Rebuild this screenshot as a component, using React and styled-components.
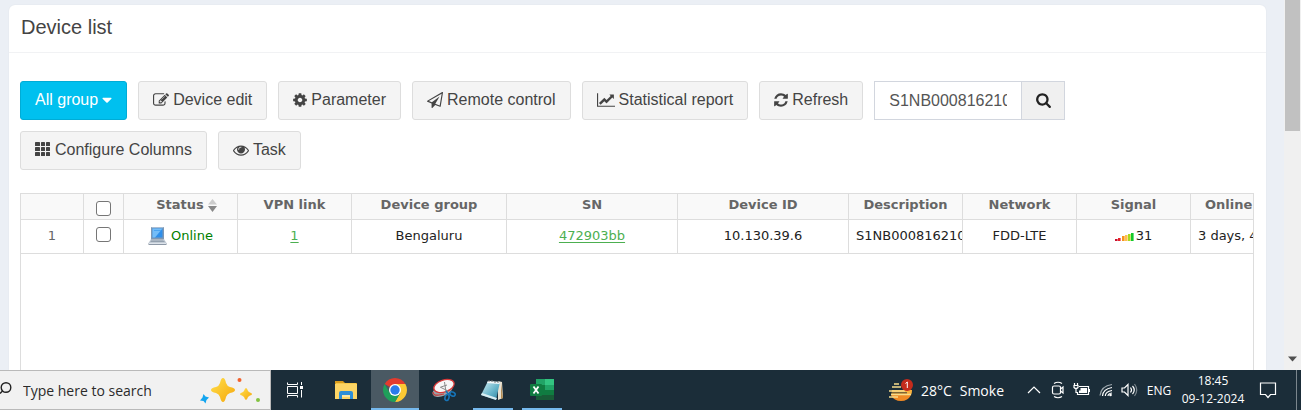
import React from "react";
import styled, { createGlobalStyle, css } from "styled-components";

const GlobalStyle = createGlobalStyle`
  *, *::before, *::after { box-sizing: border-box; }
  html, body { margin: 0; height: 100%; overflow: hidden; }
  body { font-family: "Liberation Sans", Arial, sans-serif; font-size: 16px; color: #444; }
  button, input { font: inherit; color: inherit; margin: 0; }
`;

/* ---------- layout ---------- */

const Desktop = styled.div`
  display: flex;
  flex-direction: column;
  height: 100vh;
`;

const Browser = styled.div`
  flex: 1;
  min-height: 0;
  display: flex;
  background: #ebeff5;
`;

const Page = styled.main`
  flex: 1;
  min-width: 0;
  display: flex;
  padding: 5px 18px 0 9px;
`;

const Card = styled.section`
  flex: 1;
  min-width: 0;
  display: flex;
  flex-direction: column;
  background: #fff;
  border-radius: 6px 6px 0 0;
  box-shadow: 0 0 2px rgba(0, 0, 0, 0.06);
`;

const CardHeader = styled.header`
  padding: 10px 12px 13px;
  border-bottom: 1px solid #f1f2f4;
`;

const Title = styled.h1`
  margin: 0;
  font-size: 20px;
  line-height: 24px;
  font-weight: 400;
`;

const CardBody = styled.div`
  flex: 1;
  min-height: 0;
  display: flex;
  flex-direction: column;
  gap: 23px;
  padding: 28px 12px 0 11px;
`;

/* ---------- toolbar ---------- */

const Toolbar = styled.div`
  display: flex;
  flex-wrap: wrap;
  gap: 11px;
`;

const ToolButton = styled.button`
  display: flex;
  align-items: center;
  gap: 4px;
  height: 39px;
  padding: 0 14px 2px;
  border: 1px solid #ddd;
  border-radius: 3px;
  background: #f4f4f4;
  line-height: 20px;
  white-space: nowrap;
  ${(p) =>
    p.$primary &&
    css`
      background: #00c0ef;
      border-color: #00acd6;
      color: #fff;
    `}
`;

const SearchGroup = styled.form`
  display: flex;
  height: 39px;
`;

const SearchInput = styled.input`
  width: 147px;
  padding: 0 14px;
  border: 1px solid #d2d6de;
  border-right: 0;
  border-radius: 0;
  background: #fff;
  color: #555;
  outline: 0;
`;

const SearchButton = styled.button`
  display: flex;
  align-items: center;
  justify-content: center;
  width: 44px;
  padding: 0 0 2px;
  border: 1px solid #d2d6de;
  background: #f0f0f0;
  color: #222;
`;

const Glyph = styled.svg`
  display: block;
  flex: none;
  fill: currentColor;
`;

const FA = {
  edit: [1792, "M888 1184l116-116-152-152-116 116v56h96v96h56zm440-720q-16-16-33 1l-350 350q-17 17-1 33t33-1l350-350q17-17 1-33zm80 594v190q0 119-84.5 203.5t-203.5 84.5h-832q-119 0-203.5-84.5t-84.5-203.5v-832q0-119 84.5-203.5t203.5-84.5h832q63 0 117 25 15 7 18 23 3 17-9 29l-49 49q-14 14-32 8-23-6-45-6h-832q-66 0-113 47t-47 113v832q0 66 47 113t113 47h832q66 0 113-47t47-113v-126q0-13 9-22l64-64q15-15 35-7t20 29zm-96-738l288 288-672 672h-288v-288zm444 132l-92 92-288-288 92-92q28-28 68-28t68 28l152 152q28 28 28 68t-28 68z"],
  cog: [1792, "M1152 896q0-106-75-181t-181-75-181 75-75 181 75 181 181 75 181-75 75-181zm512-109v222q0 12-8 23t-20 13l-185 28q-19 54-39 91 35 50 107 138 10 12 10 25t-9 23q-27 37-99 108t-94 71q-12 0-26-9l-138-108q-44 23-91 38-16 136-29 186-7 28-36 28h-222q-14 0-24.5-8.5t-11.5-21.5l-28-184q-49-16-90-37l-141 107q-10 9-25 9-14 0-25-11-126-114-165-168-7-10-7-23 0-12 8-23 15-21 51-66.5t54-70.5q-27-50-41-99l-183-27q-13-2-21-12.5t-8-23.5v-222q0-12 8-23t19-13l186-28q14-46 39-92-40-57-107-138-10-12-10-24 0-10 9-23 26-36 98.5-107.5t94.5-71.5q13 0 26 10l138 107q44-23 91-38 16-136 29-186 7-28 36-28h222q14 0 24.5 8.5t11.5 21.5l28 184q49 16 90 37l142-107q9-9 24-9 13 0 25 10 129 119 165 170 7 8 7 22 0 12-8 23-15 21-51 66.5t-54 70.5q26 50 41 98l183 28q13 2 21 12.5t8 23.5z", 128],
  plane: [1792, "M1764 11q33 24 27 64l-256 1536q-5 29-32 45-14 8-31 8-11 0-24-5l-527-215-298 327q-18 21-47 21-14 0-23-4-19-7-30-23.5t-11-36.5v-452l-472-193q-37-14-40-55-3-39 32-59l1664-960q35-21 68 2zm-342 1499l221-1323-1434 827 336 137 863-639-478 797z"],
  chart: [2048, "M2048 1536v128h-2048v-1536h128v1408h1920zm-128-1248v435q0 21-19.5 29.5t-35.5-7.5l-121-121-633 633q-10 10-23 10t-23-10l-233-233-416 416-192-192 585-585q10-10 23-10t23 10l233 233 464-464-121-121q-16-16-7.5-35.5t29.5-19.5h435q14 0 23 9t9 23z"],
  refresh: [1792, "M1639 1056q0 5-1 7-64 268-268 434.5t-478 166.5q-146 0-282.5-55t-243.5-157l-129 129q-19 19-45 19t-45-19-19-45v-448q0-26 19-45t45-19h448q26 0 45 19t19 45-19 45l-137 137q71 66 161 102t187 36q134 0 250-65t186-179q11-17 53-117 8-23 30-23h192q13 0 22.5 9.5t9.5 22.5zm25-800v448q0 26-19 45t-45 19h-448q-26 0-45-19t-19-45 19-45l138-138q-148-137-349-137-134 0-250 65t-186 179q-11 17-53 117-8 23-30 23h-199q-13 0-22.5-9.5t-9.5-22.5v-7q65-268 270-434.5t480-166.5q146 0 284 55.5t245 156.5l130-129q19-19 45-19t45 19 19 45z", 128],
  eye: [1792, "M1664 960q-152-236-381-353 61 104 61 225 0 185-131.5 316.5t-316.5 131.5-316.5-131.5-131.5-316.5q0-121 61-225-229 117-381 353 133 205 333.5 326.5t434.5 121.5 434.5-121.5 333.5-326.5zm-720-384q0-20-14-34t-34-14q-125 0-214.5 89.5t-89.5 214.5q0 20 14 34t34 14 34-14 14-34q0-86 61-147t147-61q20 0 34-14t14-34zm848 384q0 34-20 69-140 230-376.5 368.5t-499.5 138.5-499.5-139-376.5-368q-20-35-20-69t20-69q140-229 376.5-368t499.5-139 499.5 139 376.5 368q20 35 20 69z"],
  search: [1792, "M1216 832q0-185-131.5-316.5t-316.5-131.5-316.5 131.5-131.5 316.5 131.5 316.5 316.5 131.5 316.5-131.5 131.5-316.5zm512 832q0 52-38 90t-90 38q-54 0-90-38l-343-342q-179 124-399 124-143 0-273.5-55.5t-225-150-150-225-55.5-273.5 55.5-273.5 150-225 225-150 273.5-55.5 273.5 55.5 225 150 150 225 55.5 273.5q0 220-124 399l343 343q37 37 37 90z", 64],
  caret: [1792, "M1408 704q0 26-19 45l-448 448q-19 19-45 19t-45-19l-448-448q-19-19-19-45t19-45 45-19h896q26 0 45 19t19 45z", 352],
};

function Fa({ name }) {
  const [w, d, inset = 0] = FA[name];
  const width = Math.round(((w - inset * 2) * 16) / 1792);
  return (
    <Glyph width={width} height="16" viewBox={`${inset} 0 ${w - inset * 2} 1792`} aria-hidden="true">
      <path d={d} />
    </Glyph>
  );
}

function GridGlyph() {
  return (
    <Glyph width="16" height="16" viewBox="0 0 16 16" aria-hidden="true">
      {[0, 5, 10].flatMap((y) =>
        [0, 6, 11].map((x) => <rect key={`${x}-${y}`} x={x} y={y} width={x === 0 ? 5 : 4} height="4" rx="0.6" />)
      )}
    </Glyph>
  );
}

/* ---------- device table ---------- */

const GridBox = styled.div`
  flex: 1;
  min-height: 0;
  overflow: hidden;
  border: 1px solid #ddd;
  border-bottom: 0;
  font-family: "DejaVu Sans", Verdana, sans-serif;
  font-size: 13px;
`;

const Table = styled.table`
  width: 1284px;
  table-layout: fixed;
  border-collapse: separate;
  border-spacing: 0;
`;

const Th = styled.th`
  height: 26px;
  padding: 2px 7px 0;
  border: solid #ddd;
  border-width: 0 1px 1px 0;
  background: #f9f9f9;
  color: #666;
  font-weight: 700;
  line-height: 18px;
  vertical-align: top;
  white-space: nowrap;
`;

const Td = styled.td`
  height: 34px;
  padding: 0 7px 2px;
  border: solid #ddd;
  border-width: 0 1px 1px 0;
  color: ${(p) => (p.$muted ? "#666" : "#222")};
  line-height: 18px;
  text-align: ${(p) => (p.$start ? "left" : "center")};
  white-space: nowrap;
  overflow: hidden;
`;

const CellLine = styled.span`
  display: flex;
  align-items: center;
  justify-content: center;
  gap: ${(p) => p.$gap || 4}px;
`;

const SortLabel = styled(CellLine)`
  padding-left: 12px;
`;

const OnlineText = styled.span`
  color: #008000;
`;

const GridLink = styled.a`
  color: #4caf50;
  text-decoration: underline;
  text-underline-offset: 2px;
`;

const Check = styled.input`
  appearance: none;
  display: block;
  width: 15px;
  height: 15px;
  margin: ${(p) => (p.$head ? "5px auto 0" : "0 auto 2px")};
  border: 1px solid #767676;
  border-radius: 3px;
  background: #fff;
`;

const COLUMNS = [
  { w: 63 },
  { w: 40 },
  { w: 114, label: "Status" },
  { w: 114, label: "VPN link" },
  { w: 155, label: "Device group" },
  { w: 171, label: "SN" },
  { w: 171, label: "Device ID" },
  { w: 114, label: "Description" },
  { w: 114, label: "Network" },
  { w: 114, label: "Signal" },
  { w: 114, label: "Online time" },
];

function SortIcon() {
  return (
    <svg width="9" height="14" viewBox="0 0 9 14" aria-hidden="true">
      <path d="M4.5 1L9 6.500H0z" fill="#ccc" />
      <path d="M4.5 14L0 8h9z" fill="#888" />
    </svg>
  );
}

function ComputerIcon() {
  return (
    <svg width="19" height="20" viewBox="0 0 19 20" aria-hidden="true">
      <path d="M3 1h13v12H3z" fill="#7d97b5" />
      <path d="M3.5 1h12v1h-12z" fill="#a9bdd3" />
      <path d="M4.5 2.5h10v9h-10z" fill="#2f8fea" />
      <path d="M4.5 2.5h10L7 11.500H4.500z" fill="#74bdf8" />
      <path d="M6 4h7v1H6z" fill="#4aa4f2" />
      <path d="M3 13h13l2.500 4H0.500z" fill="#c3ccd6" />
      <path d="M3 14h12.500M2.500 15.500h14" stroke="#8794a3" strokeWidth="0.800" />
      <path d="M0.500 17h18v2h-18z" fill="#8d98a6" />
      <path d="M1 17h17v1H1z" fill="#dde3ea" />
    </svg>
  );
}

function SignalIcon() {
  const bars = [
    [0, 2, "#c8102e"], [3, 3, "#e8202a"], [7, 5, "#f7941d"],
    [10, 6, "#fdc04d"], [13, 7, "#a6d91e"], [16, 8, "#12c92b"],
  ];
  return (
    <svg width="20" height="10" viewBox="0 0 20 10" aria-hidden="true">
      {bars.map(([x, h, c]) => <rect key={x} x={x} y={10 - h} width="2.600" height={h} fill={c} />)}
    </svg>
  );
}

function DeviceTable() {
  return (
    <GridBox>
      <Table>
        <colgroup>
          {COLUMNS.map((c, i) => <col key={i} width={c.w} />)}
        </colgroup>
        <thead>
          <tr>
            <Th />
            <Th><Check $head type="checkbox" aria-label="Select all devices" /></Th>
            <Th><SortLabel>Status <SortIcon /></SortLabel></Th>
            {COLUMNS.slice(3).map((c) => <Th key={c.label}>{c.label}</Th>)}
          </tr>
        </thead>
        <tbody>
          <tr>
            <Td $muted>1</Td>
            <Td><Check type="checkbox" aria-label="Select device 472903bb" /></Td>
            <Td><CellLine><ComputerIcon /><OnlineText>Online</OnlineText></CellLine></Td>
            <Td><GridLink href="#vpn">1</GridLink></Td>
            <Td>Bengaluru</Td>
            <Td><GridLink href="#device">472903bb</GridLink></Td>
            <Td>10.130.39.6</Td>
            <Td $start>S1NB000816210</Td>
            <Td>FDD-LTE</Td>
            <Td><CellLine $gap={1}><SignalIcon />31</CellLine></Td>
            <Td $start>3 days, 4 hours</Td>
          </tr>
        </tbody>
      </Table>
    </GridBox>
  );
}

/* ---------- browser scroll bar ---------- */

const ScrollTrack = styled.div`
  display: flex;
  flex-direction: column;
  justify-content: space-between;
  width: 17px;
  padding: 0 1px;
  background: #f0f0f0;
`;

const ScrollThumb = styled.div`
  height: 131px;
  background: #c1c1c1;
`;

const ScrollArrow = styled.svg`
  display: block;
  margin: 0 auto 8px;
`;

/* ---------- taskbar ---------- */

const Taskbar = styled.footer`
  display: flex;
  height: 40px;
  background: #1b2d39;
  color: #fff;
  font-family: "Open Sans", "Segoe UI", sans-serif;
  font-size: 14px;
`;

const TaskSearch = styled.label`
  display: flex;
  align-items: center;
  gap: 11px;
  width: 271px;
  padding-right: 9px;
  border: solid #b9b9b9;
  border-width: 1px 1px 1px 0;
  background: #f1f1f1;
  color: #222;
`;

const TaskInput = styled.input`
  flex: 1;
  min-width: 0;
  padding: 0;
  border: 0;
  background: transparent;
  outline: 0;
  &::placeholder { color: #2b2b2b; opacity: 1; }
`;

const Apps = styled.nav`
  display: flex;
  gap: 1px;
`;

const AppButton = styled.button`
  display: flex;
  align-items: center;
  justify-content: center;
  width: 48px;
  padding: 0;
  border: 0;
  background: ${(p) => (p.$active ? "#4a5963" : "transparent")};
  ${(p) =>
    (p.$active || p.$running) &&
    css`
      &::after {
        content: "";
        position: absolute;
        bottom: 0;
        width: ${p.$active ? 48 : 40}px;
        height: 2px;
        background: #76b9ed;
      }
    `}
  position: relative;
`;

const TaskViewButton = styled(AppButton)`
  margin-right: 2px;
`;

const Tray = styled.div`
  display: flex;
  align-items: center;
  margin-left: auto;
`;

const TrayButton = styled.button`
  display: flex;
  align-items: center;
  justify-content: center;
  width: ${(p) => (p.$w ? `${p.$w}px` : "auto")};
  height: 40px;
  padding: 0;
  border: 0;
  background: transparent;
  font-size: ${(p) => (p.$small ? 12 : 14)}px;
  white-space: nowrap;
`;

const Weather = styled(TrayButton)`
  margin-right: 18px;
  gap: 8px;
`;

const Clock = styled(TrayButton)`
  flex-direction: column;
  line-height: 18px;
`;

const NoticeButton = styled(TrayButton)`
  margin-right: 8px;
`;

const ShowDesktop = styled.button`
  width: 5px;
  height: 40px;
  padding: 0;
  border: 0;
  border-left: 1px solid #7b868d;
  background: transparent;
`;

function TaskSearchGlyph() {
  return (
    <svg width="12" height="20" viewBox="0 0 12 20" fill="none" stroke="#222" strokeWidth="1.400" aria-hidden="true">
      <circle cx="6" cy="7.500" r="4.800" />
      <path d="M2.500 11L0 13.500" />
    </svg>
  );
}

function Sparkles() {
  return (
    <svg width="62" height="28" viewBox="0 0 62 28" aria-hidden="true">
      <defs>
        <linearGradient id="gold" x1="0" y1="0" x2="1" y2="1">
          <stop offset="0" stopColor="#ffdf4a" />
          <stop offset="1" stopColor="#f5a70c" />
        </linearGradient>
      </defs>
      <path d="M24 2q2 0 3 5 1 3 4 4 5 1 5 3t-5 3q-3 1-4 4-1 5-3 5t-3-5q-1-3-4-4-5-1-5-3t5-3q3-1 4-4 1-5 3-5z" fill="url(#gold)" />
      <path d="M47 12q1 0 2 3 1 1 2 1.500 2 .5 2 1.500t-2 1.500q-1 .5-2 1.500-1 3-2 3t-2-3q-1-1-2-1.500-2-.5-2-1.500t2-1.500q1-.5 2-1.500 1-3 2-3z" fill="url(#gold)" />
      <path d="M4.500 18l2 2.500 3.500 1-2.500 2.500-1 3.500-2-2.500-3.500-.5 2.500-3z" fill="#13a5ef" />
      <circle cx="40.500" cy="4" r="2" fill="#f2622c" />
      <circle cx="59" cy="24" r="2" fill="#83c341" />
    </svg>
  );
}

function TaskViewIcon() {
  return (
    <svg width="18" height="18" viewBox="0 0 18 18" fill="none" stroke="#fff" strokeWidth="1" aria-hidden="true">
      <path d="M1.500 1.500v2h10v-2M1.500 16.500v-2h10v2M1.500 5.500h10v7h-10zM15.500 1v3M15.500 9v7.500" />
      <path d="M14 5h3v3h-3z" fill="#fff" stroke="none" />
    </svg>
  );
}

function FolderIcon() {
  return (
    <svg width="22" height="20" viewBox="0 0 22 20" aria-hidden="true">
      <path d="M0 1h8l2 2h12v4H0z" fill="#d99b1c" />
      <path d="M1 3h20v2H1z" fill="#f5c84a" />
      <path d="M0 4h22v15H0z" fill="#fdd565" />
      <path d="M4 19v-6q0-2 2-2h10q2 0 2 2v6h-3v-4H7v4z" fill="#2e8fd8" />
      <path d="M7 15h8v2H7z" fill="#fbe7a8" />
    </svg>
  );
}

function ChromeIcon() {
  return (
    <svg width="24" height="24" viewBox="0 0 24 24" aria-hidden="true">
      <path d="M12 12L1.610 6A12 12 0 0 1 22.390 6z" fill="#e33b2e" />
      <path d="M12 6h10.390A12 12 0 0 1 12 24l5.200-9z" fill="#fcc934" />
      <path d="M1.610 6A12 12 0 0 0 12 24l5.200-9H6.800z" fill="#1fa05a" />
      <circle cx="12" cy="12" r="6" fill="#fff" />
      <circle cx="12" cy="12" r="4.700" fill="#2b7bea" />
    </svg>
  );
}

function SnipIcon() {
  return (
    <svg width="24" height="24" viewBox="0 0 24 24" aria-hidden="true">
      <ellipse cx="10.500" cy="12.500" rx="10.500" ry="5.500" fill="#9ba2a8" transform="rotate(-22 10.500 12.500)" />
      <path d="M1 14q0 4 6 3l5-1" fill="none" stroke="#c63b3b" strokeWidth="1.200" />
      <ellipse cx="12" cy="8" rx="10.500" ry="6" fill="#f7f7f7" stroke="#d83a3a" strokeWidth="1.300" transform="rotate(-18 12 8)" />
      <path d="M12.500 4l1.500 10M8 9l8 4M15 7l-6 2" stroke="#8a8a8a" strokeWidth="1" />
      <g fill="none" stroke="#1674b8" strokeWidth="1.600">
        <ellipse cx="15" cy="19.500" rx="2" ry="3" transform="rotate(15 15 19.500)" />
        <ellipse cx="20.500" cy="16" rx="2.800" ry="2" transform="rotate(25 20.500 16)" />
        <path d="M14 13l2.500 3.500 2-1" />
      </g>
    </svg>
  );
}

function NotepadIcon() {
  return (
    <svg width="24" height="24" viewBox="0 0 24 24" aria-hidden="true">
      <defs>
        <linearGradient id="pad" x1="0" y1="0" x2="1" y2="1">
          <stop offset="0" stopColor="#d8f0f5" />
          <stop offset="0.600" stopColor="#62b2c8" />
          <stop offset="1" stopColor="#2e7f9b" />
        </linearGradient>
      </defs>
      <path d="M17 3l4 1 1 16-5 2z" fill="#e8e2d3" />
      <path d="M20 5l2 15-2 1z" fill="#b28c55" />
      <path d="M7 3l12 1-4 18L0 17z" fill="url(#pad)" />
      <path d="M7 3l12 1-.5 2L6 5z" fill="#f4f8fa" />
      <path d="M0 17l15 5 1-2L1 15z" fill="#d9edf2" />
      <path d="M8 2v2m3-2v2m3-1v2m3-2v2" stroke="#777" strokeWidth="1" />
    </svg>
  );
}

function ExcelIcon() {
  return (
    <svg width="24" height="22" viewBox="0 0 24 22" aria-hidden="true">
      <path d="M6 0h9v6H6z" fill="#21a366" />
      <path d="M15 0h9v6h-9z" fill="#33c481" />
      <path d="M6 6h9v10H6z" fill="#107c41" />
      <path d="M15 6h9v5h-9z" fill="#21a366" />
      <path d="M15 11h9v5h-9z" fill="#107c41" />
      <path d="M6 16h18v5H6z" fill="#185c37" />
      <rect y="5" width="12" height="12" rx="1" fill="#107c41" />
      <path d="M3.500 7.500l5 7M8.500 7.500l-5 7" stroke="#fff" strokeWidth="1.800" />
    </svg>
  );
}

function WeatherIcon() {
  return (
    <svg width="24" height="24" viewBox="0 0 24 24" aria-hidden="true">
      <path d="M3 12h20a10.500 10.500 0 0 1-1 5H2z" fill="#fbb13c" />
      <path d="M2 17h20q-3 6-10 6-7 0-10-6z" fill="#f08a24" />
      <path d="M5 6h5M3 9h9M0 13h16M2 16.500h20M0 19h9" stroke="#f8dc8a" strokeWidth="1.700" />
      <path d="M0 14.800h18" stroke="#1b2d39" strokeWidth="0.800" />
      <circle cx="18" cy="7" r="6" fill="#c42b1c" />
      <path d="M16.500 5.500L18.300 4v6" fill="none" stroke="#fff" strokeWidth="1" />
    </svg>
  );
}

const Line = styled.svg`
  display: block;
  fill: none;
  stroke: #fff;
  stroke-width: 1.2;
`;

const ChevronIcon = () => (
  <Line width="14" height="8" viewBox="0 0 14 8" aria-hidden="true"><path d="M1 7l6-6 6 6" /></Line>
);

const MeetIcon = () => (
  <Line width="14" height="18" viewBox="0 0 14 18" aria-hidden="true">
    <path d="M3 2.500q4-2.500 8 0M3 15.500q4 2.500 8 0" />
    <rect x="1.500" y="5" width="8" height="8" rx="1.500" />
    <path d="M9.500 8l2.500-2v6l-2.500-2" />
  </Line>
);

const BatteryIcon = () => (
  <Line width="18" height="14" viewBox="0 0 18 14" aria-hidden="true">
    <path d="M6 3.500h9.500v8h-11V9" />
    <path d="M7.500 5h6.500v5H6V7.500h1.500zM16 6h1v3h-1z" fill="#fff" stroke="none" />
    <path d="M1.500 0v2M4.500 0v2M1 2.500h4v2q-2 2-4 0zM3 5.500v4h1.500" />
  </Line>
);

const WifiIcon = () => (
  <Line width="14" height="14" viewBox="0 0 14 14" aria-hidden="true">
    <path d="M1 12.500Q2 3 13 1.500" stroke="#9ca6ac" />
    <path d="M3.500 13Q4 6 13 4.500M6.300 13Q6.500 8.500 13 7.500M9 13q0-2.500 4-3" />
    <circle cx="11.500" cy="12" r="1.300" fill="#fff" stroke="none" />
  </Line>
);

const SpeakerIcon = () => (
  <Line width="17" height="14" viewBox="0 0 17 14" aria-hidden="true">
    <path d="M1 5h2.500L7 1.500v11L3.500 9H1z" />
    <path d="M9.500 4.500q2 2.500 0 5M11.500 3q3.500 4 0 8" />
    <path d="M13.500 1q4.500 6 0 12" stroke="#7b868d" />
  </Line>
);

const NoticeIcon = () => (
  <Line width="18" height="18" viewBox="0 0 18 18" aria-hidden="true">
    <path d="M1.500 2h15v11.500h-5L9 16.500 6.500 13.500h-5z" />
  </Line>
);

export default function App() {
  return (
    <>
      <GlobalStyle />
      <Desktop>
        <Browser>
          <Page>
            <Card>
              <CardHeader><Title>Device list</Title></CardHeader>
              <CardBody>
                <Toolbar>
                  <ToolButton $primary type="button">All group<Fa name="caret" /></ToolButton>
                  <ToolButton type="button"><Fa name="edit" />Device edit</ToolButton>
                  <ToolButton type="button"><Fa name="cog" />Parameter</ToolButton>
                  <ToolButton type="button"><Fa name="plane" />Remote control</ToolButton>
                  <ToolButton type="button"><Fa name="chart" />Statistical report</ToolButton>
                  <ToolButton type="button"><Fa name="refresh" />Refresh</ToolButton>
                  <SearchGroup onSubmit={(e) => e.preventDefault()}>
                    <SearchInput aria-label="Search devices" defaultValue="S1NB000816210" />
                    <SearchButton type="submit" aria-label="Search"><Fa name="search" /></SearchButton>
                  </SearchGroup>
                  <ToolButton type="button"><GridGlyph />Configure Columns</ToolButton>
                  <ToolButton type="button"><Fa name="eye" />Task</ToolButton>
                </Toolbar>
                <DeviceTable />
              </CardBody>
            </Card>
          </Page>
          <ScrollTrack>
            <ScrollThumb />
            <ScrollArrow width="9" height="6" viewBox="0 0 9 6" aria-hidden="true">
              <path d="M0 0.500h9L4.500 5.500z" fill="#505050" />
            </ScrollArrow>
          </ScrollTrack>
        </Browser>
        <Taskbar>
          <TaskSearch>
            <TaskSearchGlyph />
            <TaskInput aria-label="Type here to search" placeholder="Type here to search" />
            <Sparkles />
          </TaskSearch>
          <Apps>
            <TaskViewButton type="button" aria-label="Task view"><TaskViewIcon /></TaskViewButton>
            <AppButton type="button" aria-label="File Explorer"><FolderIcon /></AppButton>
            <AppButton $active type="button" aria-label="Chrome"><ChromeIcon /></AppButton>
            <AppButton type="button" aria-label="Snipping Tool"><SnipIcon /></AppButton>
            <AppButton $running type="button" aria-label="Notepad"><NotepadIcon /></AppButton>
            <AppButton $running type="button" aria-label="Excel"><ExcelIcon /></AppButton>
          </Apps>
          <Tray>
            <Weather type="button"><WeatherIcon /><span>28°C</span><span>Smoke</span></Weather>
            <TrayButton $w={24} type="button" aria-label="Hidden icons"><ChevronIcon /></TrayButton>
            <TrayButton $w={24} type="button" aria-label="Camera"><MeetIcon /></TrayButton>
            <TrayButton $w={24} type="button" aria-label="Battery"><BatteryIcon /></TrayButton>
            <TrayButton $w={24} type="button" aria-label="Network"><WifiIcon /></TrayButton>
            <TrayButton $w={22} type="button" aria-label="Volume"><SpeakerIcon /></TrayButton>
            <TrayButton $w={38} $small type="button">ENG</TrayButton>
            <Clock $w={70} $small type="button"><span>18:45</span><span>09-12-2024</span></Clock>
            <NoticeButton $w={40} type="button" aria-label="Notifications"><NoticeIcon /></NoticeButton>
            <ShowDesktop type="button" aria-label="Show desktop" />
          </Tray>
        </Taskbar>
      </Desktop>
    </>
  );
}
